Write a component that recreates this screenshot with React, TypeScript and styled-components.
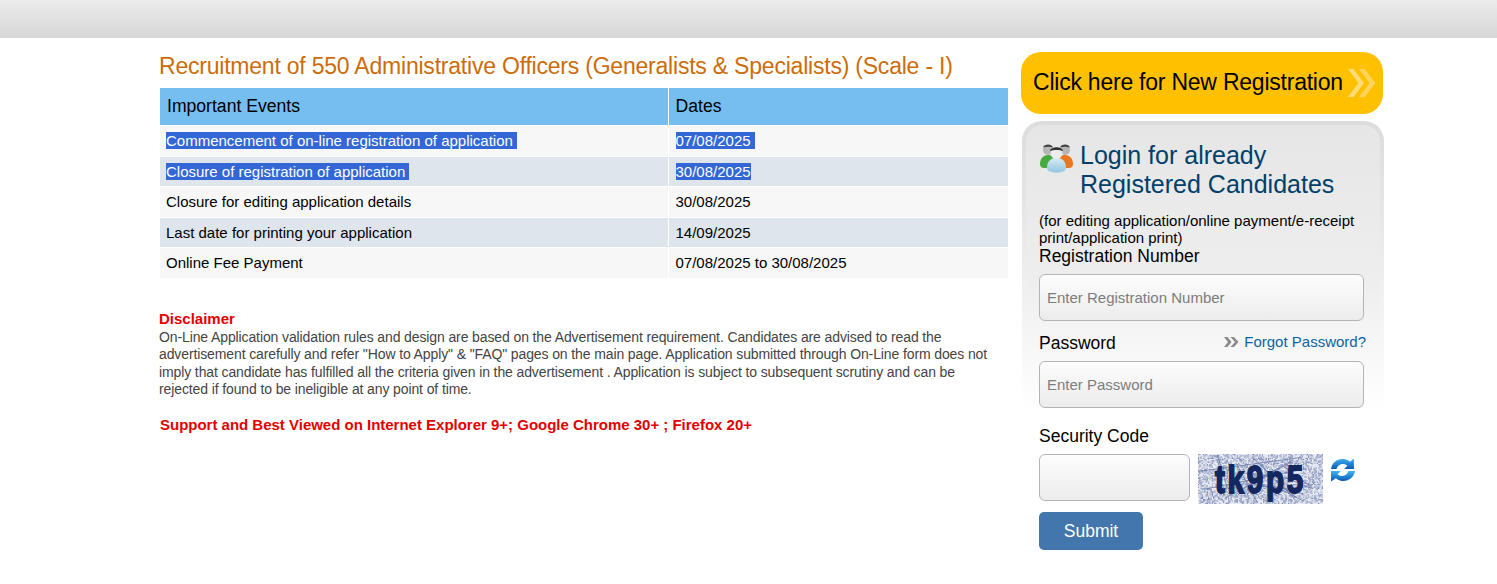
import React from "react";
import styled, { createGlobalStyle } from "styled-components";

const Global = createGlobalStyle`
  html, body { margin: 0; padding: 0; background: #fff; }
  body { font-family: "Liberation Sans", Arial, sans-serif; color: #000; }
  input::placeholder { color: #7d7d7d; opacity: 1; }
`;

const TopBar = styled.div`
  height: 38px;
  background: linear-gradient(to bottom, #ececec 0%, #d6d6d6 100%);
`;
const Main = styled.main`
  display: flex;
  align-items: flex-start;
  gap: 12px;
  padding-left: 159px;
`;
const LeftCol = styled.section`
  width: 850px;
  padding-top: 14px;
`;
const Title = styled.h1`
  margin: 0;
  font-size: 23px;
  line-height: 28px;
  font-weight: 400;
  color: #cc6d0a;
  letter-spacing: -0.215px;
  white-space: nowrap;
`;
const Table = styled.table`
  margin: 8px 0 0 1px;
  width: 848px;
  border-collapse: collapse;
  table-layout: fixed;
`;
const Head = styled.th`
  height: 37px;
  padding: 0 0 0 7px;
  background: #76bdf0;
  font-size: 17.6px;
  font-weight: 400;
  text-align: left;
  border-right: 1px solid #fff;
  &:last-child { border-right: 0; }
`;
const Row = styled.tr<{ $alt?: boolean }>`
  background: ${(p) => (p.$alt ? "#dee5ed" : "#f7f7f7")};
  border-top: 1px solid #fff;
`;
const Cell = styled.td`
  padding: 0 0 0 6px;
  height: 29.5px;
  font-size: 15px;
  line-height: 17px;
  border-right: 1px solid #fff;
  white-space: pre;
  &:last-child { border-right: 0; padding-left: 7px; }
`;
const Selected = styled.span`
  background: #3367d6;
  color: #fff;
`;
const Disclaimer = styled.div`
  margin-top: 32px;
  font-size: 14px;
  line-height: 17.5px;
  letter-spacing: -0.115px;
  color: #444;
`;
const DisclaimerHead = styled.div`
  margin-bottom: 1px;
  color: #e50000;
  font-weight: 700;
  font-size: 15px;
  line-height: 18px;
  letter-spacing: 0;
`;
const Support = styled.div`
  margin: 17px 0 0 1px;
  color: #e50000;
  font-weight: 700;
  font-size: 15px;
  line-height: 17px;
  letter-spacing: -0.01px;
`;
const RightCol = styled.aside`
  width: 363px;
  padding-top: 14px;
`;
const RegisterButton = styled.a`
  display: flex;
  align-items: center;
  justify-content: space-between;
  box-sizing: border-box;
  width: 362px;
  height: 62px;
  padding: 0 7px 2px 12px;
  background: #ffc000;
  border-radius: 20px;
  font-size: 23px;
  letter-spacing: -0.23px;
  color: #000;
  white-space: nowrap;
`;
const Panel = styled.div`
  margin: 7px 0 0 1px;
  padding: 4px 4px 0;
  height: 290px;
  box-sizing: border-box;
  width: 362px;
  border-radius: 20px 20px 0 0;
  background: linear-gradient(to bottom, #dcdcdc 0%, #e6e6e6 30%, #ffffff 100%);
`;
const PanelInner = styled.div`
  height: 100%;
  box-sizing: border-box;
  padding: 16px 0 0 13px;
  border-radius: 16px 16px 0 0;
  background: linear-gradient(to bottom, #e6e6e6 0%, #eeeeee 55%, #ffffff 100%);
`;
const LoginHead = styled.div`
  display: flex;
  gap: 6px;
`;
const LoginTitle = styled.h2`
  margin: 0;
  font-size: 25px;
  line-height: 29px;
  font-weight: 400;
  color: #00406b;
`;
const Note = styled.p`
  margin: 14px 0 0;
  font-size: 15px;
  line-height: 16.5px;
`;
const FieldLabel = styled.label`
  display: block;
  font-size: 17.5px;
  line-height: 21px;
`;
const TextInput = styled.input`
  display: block;
  box-sizing: border-box;
  width: 325px;
  height: 47px;
  margin-top: 7px;
  padding: 0 7px;
  border: 1px solid #b4b4b4;
  border-radius: 6px;
  background: linear-gradient(to bottom, #fdfdfd 0%, #ececec 100%);
  font-family: inherit;
  font-size: 15px;
  outline: none;
`;
const PasswordRow = styled.div`
  display: flex;
  align-items: center;
  justify-content: space-between;
  margin: 12px 0 0;
  width: 327px;
  height: 21px;
`;
const Forgot = styled.a`
  display: flex;
  align-items: center;
  gap: 5px;
  font-size: 15px;
  color: #0a64a4;
  margin-top: -4px;
`;
const Security = styled.div`
  padding: 15px 0 0 18px;
`;
const CaptchaRow = styled.div`
  display: flex;
  align-items: flex-start;
  margin-top: 7px;
`;
const CodeInput = styled(TextInput)`
  width: 151px;
  margin: 0 8px 0 0;
`;
const Captcha = styled.svg`
  display: block;
  flex: none;
`;
const Refresh = styled.svg`
  margin: 4px 0 0 8px;
  flex: none;
`;
const Submit = styled.button`
  display: block;
  width: 104px;
  height: 38px;
  margin-top: 8px;
  border: 0;
  border-radius: 5px;
  background: #4276ac;
  color: #fff;
  font-family: inherit;
  font-size: 17.5px;
`;
const BigChevrons = styled.svg`
  flex: none;
  margin-top: 2px;
`;
const UsersIcon = styled.svg`
  flex: none;
  margin-top: 1px;
`;

const noise = (() => {
  let s = 73;
  const r = () => ((s = (s * 16807) % 2147483647) / 2147483647);
  const out: { x: number; y: number; o: number }[] = [];
  for (let y = 0; y < 50; y += 1.25)
    for (let x = 0; x < 125; x += 1.25) if (r() < 0.5) out.push({ x, y, o: 0.2 + r() * 0.6 });
  const lines: string[] = [];
  for (let i = 0; i < 16; i++)
    lines.push(`M${r() * 125} ${r() * 50}L${r() * 125} ${r() * 50}`);
  return { out, lines };
})();

const Users = () => (
  <UsersIcon width="35" height="31" viewBox="0 0 35 31">
    <defs>
      <linearGradient id="bd" x1="0" y1="0" x2="0" y2="1">
        <stop offset="0" stopColor="#d5edf5" />
        <stop offset="1" stopColor="#93c6de" />
      </linearGradient>
    </defs>
    <circle cx="9" cy="8" r="5" fill="#b5b5b5" />
    <circle cx="26" cy="8" r="5" fill="#b5b5b5" />
    <path d="M1 22c0-6 4-9 8-9s6 2 6 6l-3 7H5c-2 0-4-1-4-4z" fill="#47a93e" />
    <path d="M34 22c0-6-4-9-8-9s-6 2-6 6l3 7h7c2 0 4-1 4-4z" fill="#e8771f" />
    <path d="M4 5.500c1-4 9-4 10 0-3-1-7-1-10 0zM21 5.500c1-4 9-4 10 0-3-1-7-1-10 0z" fill="#444" />
    <circle cx="17.500" cy="11" r="6" fill="#ececec" />
    <path d="M11 9c1-5 12-5 13 0-3-1.500-10-1.500-13 0z" fill="#333" />
    <path d="M8 26c0-7 4-10 9.500-10S27 19 27 26c0 3-4 4.500-9.500 4.500S8 29 8 26z" fill="url(#bd)" />
  </UsersIcon>
);

const Chevrons = () => (
  <BigChevrons width="28" height="28" viewBox="0 0 28 28">
    <path d="M0 0h5.500L16 14 5.500 28H0l10.500-14z" fill="#ffdc7a" />
    <path d="M11 0h5.500L27.500 14l-11 14H11l10.500-14z" fill="#ffd45c" />
  </BigChevrons>
);

const SmallChevrons = () => (
  <svg width="15" height="10" viewBox="0 0 15 10">
    <path d="M0 0h3.500l4 5-4 5H0l4-5z" fill="#8a8a8a" />
    <path d="M6.500 0H10l4.500 5L10 10H6.500l4.500-5z" fill="#8a8a8a" />
  </svg>
);

const events: [React.ReactNode, React.ReactNode][] = [
  [<Selected>{"Commencement of on-line registration of application "}</Selected>, <Selected>{"07/08/2025 "}</Selected>],
  [<Selected>{"Closure of registration of application "}</Selected>, <Selected>30/08/2025</Selected>],
  ["Closure for editing application details", "30/08/2025"],
  ["Last date for printing your application", "14/09/2025"],
  ["Online Fee Payment", "07/08/2025 to 30/08/2025"],
];

export default function App() {
  return (
    <>
      <Global />
      <TopBar />
      <Main>
        <LeftCol>
          <Title>Recruitment of 550 Administrative Officers (Generalists &amp; Specialists) (Scale - I)</Title>
          <Table>
            <colgroup>
              <col style={{ width: 508 }} />
              <col />
            </colgroup>
            <thead>
              <tr>
                <Head>Important Events</Head>
                <Head>Dates</Head>
              </tr>
            </thead>
            <tbody>
              {events.map((e, i) => (
                <Row key={i} $alt={i % 2 === 1}>
                  <Cell>{e[0]}</Cell>
                  <Cell>{e[1]}</Cell>
                </Row>
              ))}
            </tbody>
          </Table>
          <Disclaimer>
            <DisclaimerHead>Disclaimer</DisclaimerHead>
            On-Line Application validation rules and design are based on the Advertisement requirement. Candidates are advised to read the
            <br />
            advertisement carefully and refer "How to Apply" &amp; "FAQ" pages on the main page. Application submitted through On-Line form does not
            <br />
            imply that candidate has fulfilled all the criteria given in the advertisement . Application is subject to subsequent scrutiny and can be
            <br />
            rejected if found to be ineligible at any point of time.
          </Disclaimer>
          <Support>Support and Best Viewed on Internet Explorer 9+; Google Chrome 30+ ; Firefox 20+</Support>
        </LeftCol>
        <RightCol>
          <RegisterButton>
            Click here for New Registration
            <Chevrons />
          </RegisterButton>
          <Panel>
            <PanelInner>
              <LoginHead>
                <Users />
                <LoginTitle>
                  Login for already
                  <br />
                  Registered Candidates
                </LoginTitle>
              </LoginHead>
              <Note>
                (for editing application/online payment/e-receipt
                <br />
                print/application print)
              </Note>
              <FieldLabel>Registration Number</FieldLabel>
              <TextInput placeholder="Enter Registration Number" />
              <PasswordRow>
                <FieldLabel>Password</FieldLabel>
                <Forgot>
                  <SmallChevrons />
                  Forgot Password?
                </Forgot>
              </PasswordRow>
              <TextInput placeholder="Enter Password" />
            </PanelInner>
          </Panel>
          <Security>
            <FieldLabel>Security Code</FieldLabel>
            <CaptchaRow>
              <CodeInput />
              <Captcha width="125" height="50" viewBox="0 0 125 50">
                <rect width="125" height="50" fill="#e6e9f2" />
                {noise.out.map((d, i) => (
                  <rect key={i} x={d.x} y={d.y} width="1.25" height="1.25" fill="#5566a0" opacity={d.o} />
                ))}
                {noise.lines.map((d, i) => (
                  <path key={i} d={d} stroke="#6a76a8" strokeWidth="0.8" fill="none" />
                ))}
                <text
                  transform="translate(17 39) scale(0.78 1)"
                  fontFamily="'Liberation Sans', sans-serif"
                  fontWeight="700"
                  fontSize="38"
                  fill="#14275f"
                  stroke="#14275f"
                  strokeWidth="1.8"
                  letterSpacing="3.5"
                >
                  tk9p5
                </text>
              </Captcha>
              <Refresh width="24" height="24" viewBox="2 2.500 22 21">
                <defs>
                  <linearGradient id="rf" x1="0" y1="0" x2="0" y2="1">
                    <stop offset="0" stopColor="#3fb2f2" />
                    <stop offset="1" stopColor="#0a58b4" />
                  </linearGradient>
                </defs>
                <path d="M2 12C3 6 8 2.500 13.500 3c2.500.2 4.500 1.200 6 2.500L23 2.500V12h-9l3-3c-1-1-2.500-1.500-4-1.500-3 0-5 1.500-6 4.500z" fill="url(#rf)" />
                <path d="M24 14c-1 6-6 9.500-11.500 9-2.500-.2-4.500-1.200-6-2.500L2 23.500V14h9l-3 3c1 1 2.500 1.500 4 1.500 3 0 5-1.500 6-4.500z" fill="url(#rf)" />
              </Refresh>
            </CaptchaRow>
            <Submit>Submit</Submit>
          </Security>
        </RightCol>
      </Main>
    </>
  );
}
